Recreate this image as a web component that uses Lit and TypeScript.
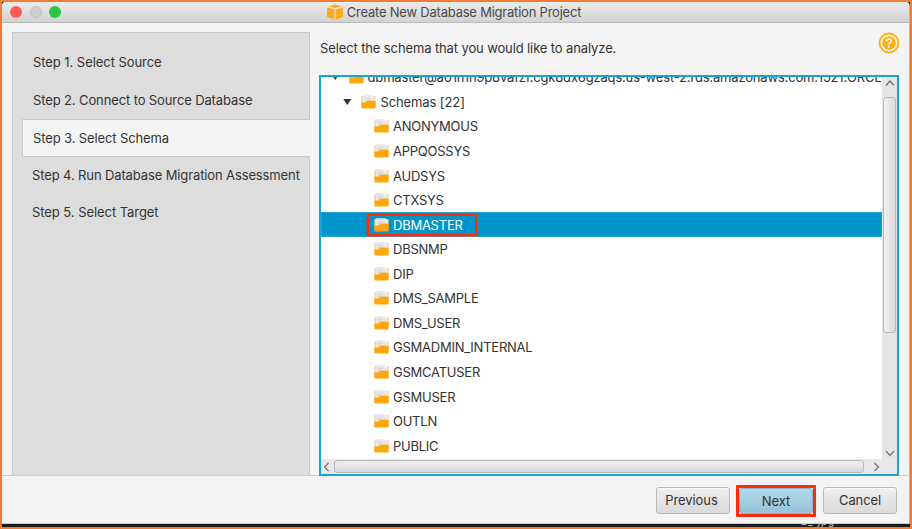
import { LitElement, html, css, svg } from "lit";
import { customElement, property } from "lit/decorators.js";
import { classMap } from "lit/directives/class-map.js";

const STEPS = [
  "Step 1. Select Source",
  "Step 2. Connect to Source Database",
  "Step 3. Select Schema",
  "Step 4. Run Database Migration Assessment",
  "Step 5. Select Target",
];

const SCHEMAS = [
  "ANONYMOUS", "APPQOSSYS", "AUDSYS", "CTXSYS", "DBMASTER", "DBSNMP", "DIP",
  "DMS_SAMPLE", "DMS_USER", "GSMADMIN_INTERNAL", "GSMCATUSER", "GSMUSER",
  "OUTLN", "PUBLIC",
];

const folder = html`<svg class="folder" width="15" height="14" viewBox="0 0 15 14">
  <path d="M0.3 2.2Q0.3 1 1.5 1H13.4Q14.6 1 14.6 2.2V9H0.3Z" fill="#f3cf94" />
  <path d="M1.5 9V1.6Q1.5 0.3 2.9 0.3H11L13.6 2.6V9Z" fill="#e6e6e8" />
  <path d="M10.6 0.4V2.8H13.4Z" fill="#fafafa" />
  <path d="M4 3.6H9M4 5.5H11" stroke="#cfcfd3" stroke-width="0.8" />
  <path d="M0.3 8.2Q0.3 7.4 1.1 7.4H4.6L6.2 5.8H13.9Q14.7 5.8 14.7 6.6V12.2Q14.7 13.6 13.3 13.6H1.7Q0.3 13.6 0.3 12.2Z" fill="#ffa60a" />
</svg>`;

const chevron = (d: string) => svg`<path d=${d} fill="none" stroke="#707070" stroke-width="1.2" />`;

@customElement("step-list")
class StepList extends LitElement {
  @property({ type: Number }) current = 2;
  static styles = css`
    :host { display: flex; flex-direction: column; box-sizing: border-box; width: 298px; height: 443px;
      background: #ddd; border: 1px solid #c8c8c8; border-bottom: 0; padding-top: 9px; letter-spacing: -.12px; }
    .step { height: 38px; line-height: 40px; padding-left: 20px; white-space: nowrap; }
    .step:nth-of-type(1), .step:nth-of-type(5) { letter-spacing: -.06px; }
    .step:nth-of-type(2) { height: 39px; }
    .active { box-sizing: border-box; height: 38px; line-height: 37px; margin: 0 -1px 0 9px; padding-left: 10px; background: #f4f4f4;
      border: 1px solid #c8c8c8; border-right: 0; }
    .after { height: 37px; line-height: 36px; padding-left: 19px; }
  `;
  render() {
    return STEPS.map((s, i) => html`<div class=${classMap({
      step: true, active: i === this.current, after: i > this.current })}>${s}</div>`);
  }
}

@customElement("schema-tree")
class SchemaTree extends LitElement {
  @property() selected = "DBMASTER";
  static styles = css`
    :host { display: grid; grid-template: 382px 15px / 561px 15px; box-sizing: border-box; width: 580px; height: 401px;
      border: 2px solid #18a4d4; background: #fff; }
    .rows { overflow: hidden; }
    .list { margin-top: -12px; }
    .row { display: flex; align-items: center; height: 24.57px; white-space: nowrap; box-sizing: border-box; }
    .root { padding-left: 10px; }
    .group { padding-left: 22px; }
    .leaf { padding-left: 52.6px; letter-spacing: -.24px; }
    .selected { background: #0096cb; color: #fff; box-shadow: inset 0 0 0 1px #1ba3d3; }
    .arrow { width: 9px; height: 6px; margin-right: 9px; flex: none; }
    .folder { margin-right: 4.4px; flex: none; }
    .group .name { letter-spacing: -.1px; }
    .name { position: relative; }
    .root .folder { margin-right: 3.6px; }
    .root .name { letter-spacing: -.18px; }
    .mark { position: absolute; left: -26px; top: -3px; width: 106px; height: 18px; border: 2px solid #fc2b0b; border-radius: 1px;
      box-shadow: 0 0 0 .4px #fc2b0b; }
    .vbar, .hbar { background: #e8e8e8; display: flex; align-items: center; }
    .vbar { flex-direction: column; background: #e5e5e5; }
    .vthumb { box-sizing: border-box; width: 13px; height: 236px; margin-top: 7px; margin-bottom: 113px; border: 1px solid #b8b8b8; border-radius: 3px;
      background: linear-gradient(90deg, #f0f0f0, #dadada); }
    .hthumb { box-sizing: border-box; width: 530px; height: 13px; margin-right: 7px; border: 1px solid #b8b8b8; border-radius: 3px;
      background: linear-gradient(#efefef, #dadada); }
    .corner { background: #e8e8e8; }
    .vbar svg, .hbar svg { flex: none; }
  `;
  render() {
    const arrow = html`<svg class="arrow" viewBox="0 0 9 6"><path d="M0.3 0H8.3L4.3 6Z" fill="#333" /></svg>`;
    return html`
      <div class="rows"><div class="list">
        <div class="row root">${arrow}${folder}<span class="name">dbmaster@a01h1h9p8vafzf.cgk8dx6gzaqs.us-west-2.rds.amazonaws.com:1521:ORCL</span></div>
        <div class="row group">${arrow}${folder}<span class="name">Schemas [22]</span></div>
        ${SCHEMAS.map((n) => html`<div class=${classMap({ row: true, leaf: true, selected: n === this.selected })}>
          ${folder}<span class="name">${n}${n === this.selected ? html`<i class="mark"></i>` : ""}</span></div>`)}
      </div></div>
      <div class="vbar">
        <svg width="15" height="13">${chevron("M4 8.5L8 4L12 8.5")}</svg>
        <div class="vthumb"></div>
        <svg width="15" height="13">${chevron("M4 5L8 9.5L12 5")}</svg>
      </div>
      <div class="hbar">
        <svg width="13" height="15">${chevron("M7.5 4L3.5 8L7.5 12")}</svg>
        <div class="hthumb"></div>
        <svg width="11" height="15">${chevron("M3.5 4L7.5 8L3.5 12")}</svg>
      </div>
      <div class="corner"></div>`;
  }
}

@customElement("app-root")
class AppRoot extends LitElement {
  static styles = css`
    :host { display: flex; flex-direction: column; box-sizing: border-box; width: 912px; height: 529px; overflow: hidden;
      border: 2px solid #f07d32; background: #1b1b1d; font: 13px/16px Inter, sans-serif; color: #333; }
    .window { display: flex; flex-direction: column; width: 907px; height: 522px; background: #f4f4f4; border-radius: 4px 4px 0 0;
      box-shadow: 1px 0 0 #b5b5b5; box-sizing: border-box; border-bottom: 1px solid #c9c9c9; }
    .bar { position: relative; display: flex; align-items: center; justify-content: center; height: 21px; box-sizing: border-box; flex: none;
      background: linear-gradient(#ebebeb, #d2d2d2); border-bottom: 1px solid #b9b9b9; border-radius: 4px 4px 0 0; }
    .lights { position: absolute; left: 8px; top: 4px; display: flex; gap: 7.6px; }
    .light { width: 12px; height: 12px; border-radius: 50%; box-sizing: border-box; }
    .red { background: #fc5b57; }
    .gray { background: #cfcfcf; border: 1px solid #bcbcbc; }
    .green { background: #28c940; }
    .title { display: flex; align-items: center; gap: 4px; margin: 0 0 0 -3px; color: #4a4a4a; white-space: nowrap; letter-spacing: -.22px; }
    .body { display: flex; height: 453px; box-sizing: border-box; padding: 9px 0 0 10px; border-bottom: 1px solid #d0d0d0; flex: none; }
    .main { margin-left: 9px; width: 580px; }
    .head { display: flex; height: 43px; justify-content: space-between; }
    .prompt { margin-top: 8px; margin-left: 1px; white-space: nowrap; letter-spacing: -.12px; }
    .help { margin: 0 -1px 0 0; }
    .foot { display: flex; align-items: center; justify-content: flex-end; padding: 3px 12px 0 0; height: 46px; box-sizing: border-box; letter-spacing: -.1px; }
    .btn { box-sizing: border-box; width: 74px; height: 27px; line-height: 25px; text-align: center; border: 1px solid #b9b9b9; border-radius: 3px;
      background: linear-gradient(#efefef, #dadada); box-shadow: inset 0 1px 0 #f8f8f8; }
    .back { padding-right: 3px; }
    .ring { border: 3px solid #fc2b0b; border-radius: 1px; margin: 0 7px 0 6px; }
    .ring .btn { height: 26px; line-height: 24px; background: linear-gradient(#b1d9ec, #96c3d9); border-color: #8bb7cb; box-shadow: none; }
    .under { height: 3px; overflow: hidden; font-size: 10px; line-height: 10px; color: #c8c8c8; flex: none; }
    .under span { display: block; margin: -8px 0 0 799px; letter-spacing: 1px; }
  `;
  render() {
    return html`
      <div class="window">
        <div class="bar">
          <div class="lights"><i class="light red"></i><i class="light gray"></i><i class="light green"></i></div>
          <div class="title">
            <svg width="16" height="16" viewBox="0 0 16 16">
              <path d="M0 3.6L7.4 5.3V15.8L0 13Z" fill="#fbac22" /><path d="M16 3.6L8.6 5.3V15.8L16 13Z" fill="#fbac22" />
              <path d="M1.8 2.5L8 0.2L14.2 2.5L8 4.1Z" fill="#fbac22" />
            </svg><span>Create New Database Migration Project</span>
          </div>
        </div>
        <div class="body">
          <step-list></step-list>
          <div class="main">
            <div class="head">
              <span class="prompt">Select the schema that you would like to analyze.</span>
              <svg class="help" width="22" height="22" viewBox="0 0 22 22">
                <circle cx="11" cy="11" r="9.5" fill="#fff8e8" stroke="#ffae12" stroke-width="1.8" />
                <circle cx="11" cy="11" r="6.8" fill="#ffae12" />
                <path d="M8.6 9.2C8.6 6.2 13.6 6.4 13.3 9.2C13.1 10.7 11 10.7 11 12.6" fill="none" stroke="#fff" stroke-width="1.7" />
                <circle cx="11" cy="14.7" r="1" fill="#fff" />
              </svg>
            </div>
            <schema-tree></schema-tree>
          </div>
        </div>
        <div class="foot">
          <div class="btn back">Previous</div>
          <div class="ring"><div class="btn">Next</div></div>
          <div class="btn">Cancel</div>
        </div>
      </div>
      <div class="under"><span>2_ jpg</span></div>`;
  }
}
